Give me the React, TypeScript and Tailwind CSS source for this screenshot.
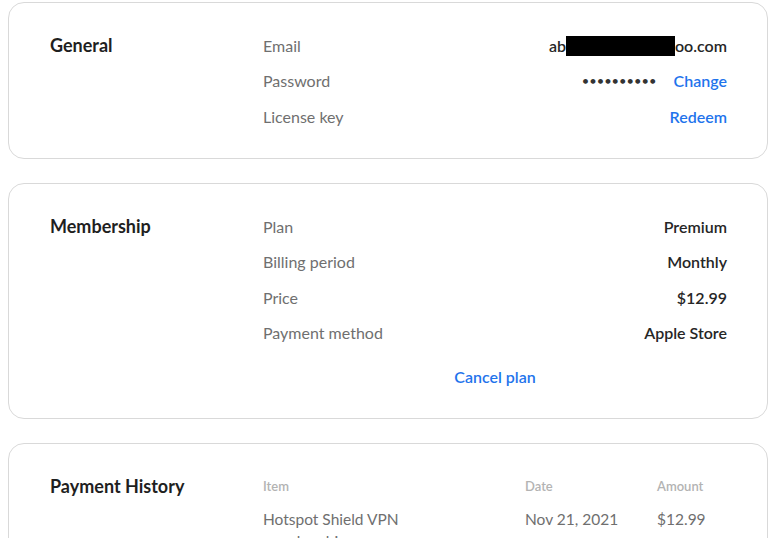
const font = { fontFamily: 'Lato, "Open Sans", sans-serif' };

const Row = ({ label, children }: { label: string; children: React.ReactNode }) => (
  <div className="flex h-[35.5px] items-center justify-between">
    <span className="text-[16px] text-[#6f6f6f]">{label}</span>
    <div className="flex items-center text-[16px] font-semibold text-[#262626]">{children}</div>
  </div>
);

const Card = ({ title, children }: { title: string; children: React.ReactNode }) => (
  <section className="flex w-[760px] rounded-[16px] border border-[#d9d9d9] bg-white pl-[41px] pr-[40px] pt-[25px] pb-[23px]">
    <h2 className="flex h-[35.5px] w-[213px] shrink-0 items-center text-[18px] font-bold text-[#1f1f1f]">{title}</h2>
    <div className="flex-1">{children}</div>
  </section>
);

export default function App() {
  return (
    <div className="flex min-h-screen flex-col gap-[24.5px] bg-white px-2 pt-[2px]" style={font}>
      <Card title="General">
        <Row label="Email">
          <span>ab</span>
          <span className="inline-block h-[20px] w-[109px] bg-black" />
          <span>oo.com</span>
        </Row>
        <Row label="Password">
          <span className="text-[12px] tracking-[0.5px] text-[#333]">••••••••••</span>
          <a className="ml-[17px] text-[#1f74ec]">Change</a>
        </Row>
        <Row label="License key">
          <a className="text-[#1f74ec]">Redeem</a>
        </Row>
      </Card>

      <Card title="Membership">
        <Row label="Plan">Premium</Row>
        <Row label="Billing period">Monthly</Row>
        <Row label="Price">$12.99</Row>
        <Row label="Payment method">Apple Store</Row>
        <div className="mt-[8px] flex h-[35.5px] items-center justify-center">
          <a className="text-[16px] font-semibold text-[#1f74ec]">Cancel plan</a>
        </div>
      </Card>

      <section className="flex w-[760px] rounded-[16px] border border-[#d9d9d9] bg-white pl-[41px] pr-[40px] pt-[25px] pb-[23px]">
        <h2 className="flex h-[35.5px] w-[213px] shrink-0 items-center text-[18px] font-bold text-[#1f1f1f]">Payment History</h2>
        <div className="flex-1">
          <div className="flex h-[35.5px] items-center text-[13px] font-semibold text-[#b3b3b3]">
            <span className="w-[262px]">Item</span>
            <span className="w-[132px]">Date</span>
            <span>Amount</span>
          </div>
          <div className="mt-[3px] flex text-[15.5px] leading-[22px] text-[#6f6f6f]">
            <span className="w-[262px] pr-[100px]">Hotspot Shield VPN membership</span>
            <span className="w-[132px]">Nov 21, 2021</span>
            <span>$12.99</span>
          </div>
        </div>
      </section>
    </div>
  );
}
